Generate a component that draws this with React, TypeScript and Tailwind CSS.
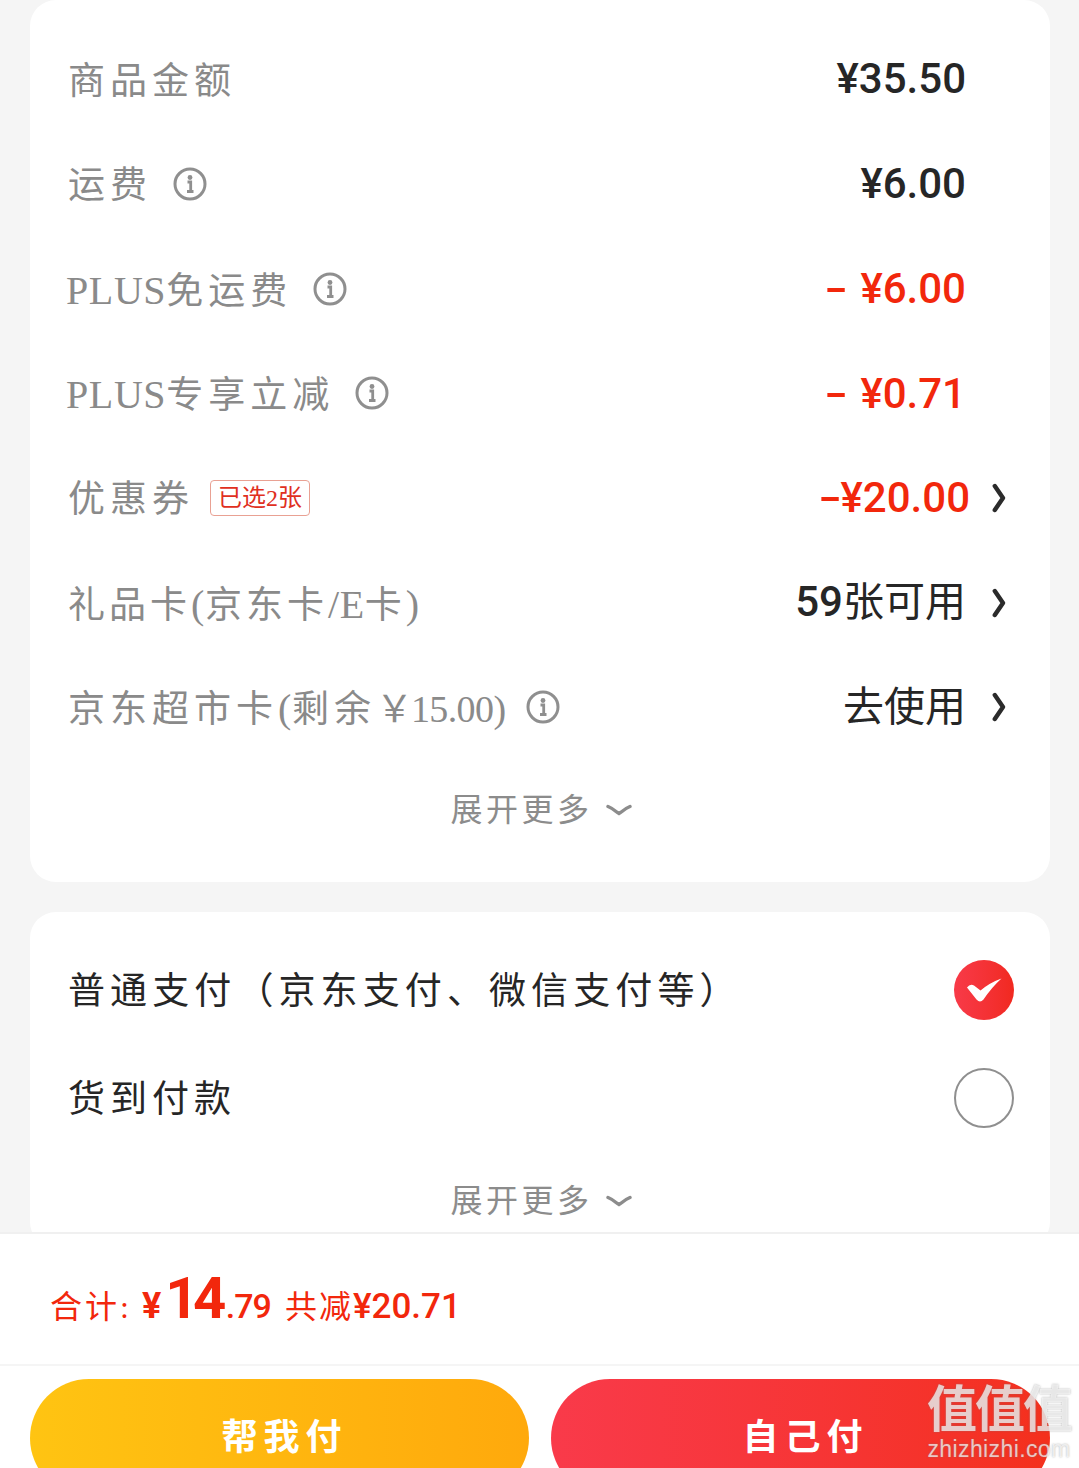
const serif = "font-['Liberation_Serif','Noto_Sans_CJK_SC',serif]";
const numFont = "font-['Roboto','Noto_Sans_CJK_SC',sans-serif]";

function InfoIcon() {
  return (
    <svg className="w-[34px] h-[34px]" viewBox="0 0 34 34" fill="none">
      <circle cx="17" cy="17" r="15" stroke="#8f8f8f" strokeWidth="3" />
      <circle cx="17" cy="10.5" r="2.4" fill="#8f8f8f" />
      <path d="M14.5 15h3.2v9M14 24.5h6.5" stroke="#8f8f8f" strokeWidth="2.8" />
    </svg>
  );
}

function Chevron() {
  return (
    <svg className="w-[14px] h-[30px]" viewBox="0 0 14 30" fill="none">
      <path d="M2.8 3 11 15 2.8 27" stroke="#2b2b2b" strokeWidth="4.4" strokeLinecap="round" strokeLinejoin="round" />
    </svg>
  );
}

function ExpandMore() {
  return (
    <div className="flex items-center justify-center h-full pt-[2px]">
      <span className={`${serif} text-[32px] tracking-[3.5px] text-[#8c8c8c]`}>展开更多</span>
      <svg className="w-[26px] h-[12px] ml-[13px]" viewBox="0 0 26 12" fill="none">
        <path d="M2 2.5C8 5 10 8 13 9.5 16 8 18 5 24 2.5" stroke="#8c8c8c" strokeWidth="3.4" strokeLinecap="round" />
      </svg>
    </div>
  );
}

// latin runs sit at a larger size, the CJK glyphs are spaced out
function Label({ text, tracking }: { text: string; tracking: string }) {
  const parts = text.match(/[A-Za-z0-9.()/]+|[^A-Za-z0-9.()/]+/g) ?? [];
  return (
    <span className={`${serif} text-[37px] ${tracking} text-[#8a8a8a] whitespace-pre mt-[4px]`}>
      {parts.map((part, i) => {
        if (/^[0-9]/.test(part)) {
          return <span key={i} className="text-[38px] tracking-[-0.6px] ml-[-7px]">{part}</span>;
        }
        if (/^[A-Za-z.()/]/.test(part)) {
          return <span key={i} className="text-[40px] tracking-[0.6px]">{part}</span>;
        }
        return <span key={i}>{part}</span>;
      })}
    </span>
  );
}

function Value({ row }: { row: Row }) {
  const color = row.red ? 'text-[#f2270c]' : 'text-[#262626]';
  const match = row.value.match(/^(-)( ?)(.*)$/);
  if (match) {
    return (
      <span className={`${numFont} font-medium text-[42px] whitespace-pre ${color} ${row.arrow ? 'mr-[-4px] mb-[2px]' : ''}`}>
        <span className={`inline-block scale-x-[1.6] ml-[4px] ${match[2] ? 'mr-[17px]' : 'mr-[3px]'}`}>-</span>
        {match[3]}
      </span>
    );
  }
  const parts = row.value.match(/[0-9¥.]+|[^0-9¥.]+/g) ?? [];
  return (
    <span className={`${numFont} font-medium text-[42px] whitespace-pre mb-[2px] ${color}`}>
      {parts.map((part, i) =>
        /^[0-9¥.]/.test(part) ? (
          <span key={i}>{part}</span>
        ) : (
          <span key={i} className="font-normal text-[41px]">{part}</span>
        ),
      )}
    </span>
  );
}

type Row = {
  label: string;
  value: string;
  info?: boolean;
  red?: boolean;
  arrow?: boolean;
  badge?: boolean;
  shift?: string;
  tracking?: string;
};

const rows: Row[] = [
  { label: '商品金额', value: '¥35.50' },
  { label: '运费', value: '¥6.00', info: true },
  { label: 'PLUS免运费', value: '- ¥6.00', info: true, red: true, shift: '-ml-[2px]' },
  { label: 'PLUS专享立减', value: '- ¥0.71', info: true, red: true, shift: '-ml-[2px]' },
  { label: '优惠券', value: '-¥20.00', red: true, arrow: true, badge: true },
  { label: '礼品卡(京东卡/E卡)', value: '59张可用', arrow: true, tracking: 'tracking-[4px]' },
  { label: '京东超市卡(剩余￥15.00)', value: '去使用', info: true, arrow: true },
];

export default function App() {
  return (
    <div className="h-[1468px] w-[1079px] overflow-hidden bg-[#f5f5f5] flex flex-col relative">
      <div className="flex-1 min-h-0 overflow-hidden pl-[30px] pr-[29px]">
        {/* Price details */}
        <div className="bg-white rounded-[26px] pt-[27px] pb-[24px] pl-[38px] pr-[44px]">
          {rows.map((row) => (
            <div key={row.label} className="h-[104.7px] flex items-center justify-between">
              <div className={`flex items-center ${row.shift ?? ''}`}>
                <Label text={row.label} tracking={row.tracking ?? 'tracking-[5px]'} />
                {row.info && <span className="ml-[21px] flex"><InfoIcon /></span>}
                {row.badge && (
                  <span className={`${serif} ml-[16px] h-[36px] w-[100px] flex items-center justify-center border border-[#e9a193] rounded-[4px] text-[24px] text-[#e0301e]`}>
                    已选2张
                  </span>
                )}
              </div>
              <div className="flex items-center">
                <Value row={row} />
                <span className="w-[40px] flex justify-end">{row.arrow && <Chevron />}</span>
              </div>
            </div>
          ))}
          <div className="h-[98px] pl-[8px]">
            <ExpandMore />
          </div>
        </div>

        {/* Payment method */}
        <div className="bg-white rounded-[26px] mt-[30px] pt-[24px] pl-[38px] pr-[36px]">
          <div className="h-[108px] flex items-center justify-between">
            <span className={`${serif} text-[37px] tracking-[5.1px] text-[#262626] mt-[3px]`}>普通支付（京东支付、微信支付等）</span>
            <span className="w-[60px] h-[60px] rounded-full bg-gradient-to-r from-[#f83a48] to-[#f1291f] flex items-center justify-center">
              <svg className="w-[38px] h-[28px]" viewBox="0 0 38 28" fill="white">
                <path d="M2 11.5Q5 7.5 9 9.5L15.5 14.5Q25 6.5 36.5 2.5 27 11 18.5 23.5 15 27.5 11.5 23.5Z" />
              </svg>
            </span>
          </div>
          <div className="h-[108px] flex items-center justify-between">
            <span className={`${serif} text-[37px] tracking-[5px] text-[#262626] mt-[3px]`}>货到付款</span>
            <span className="w-[60px] h-[60px] rounded-full border-2 border-[#8f8f8f]" />
          </div>
          <div className="h-[96px]">
            <ExpandMore />
          </div>
        </div>
      </div>

      {/* Footer */}
      <div className="bg-white border-t-2 border-[#f0f0f0] shrink-0 h-[236px]">
        <div className="h-[132px] border-b-2 border-[#f5f5f5] flex items-baseline pl-[50px] pt-[21px] text-[#f2270c] font-['Roboto',sans-serif]">
          <span className={`${serif} text-[32px] tracking-[3px]`}>合计:</span>
          <span className="font-bold text-[36px] ml-[10px]">¥</span>
          <span className="font-bold text-[58px] tracking-[-5.5px] ml-[4px] mr-[5px]">14</span>
          <span className="font-medium text-[34px] tracking-[-1px]">.79</span>
          <span className={`${serif} text-[32px] tracking-[2px] ml-[14px]`}>共减</span>
          <span className="font-medium text-[35px]">¥20.71</span>
        </div>
        <div className="flex gap-[22px] pl-[30px] pr-[29px] pt-[13px]">
          <div className="flex-1 h-[118px] rounded-full bg-gradient-to-r from-[#ffc412] to-[#ffa90c] flex items-center justify-center pl-[10px]">
            <span className={`${serif} font-bold text-[36px] tracking-[6px] text-white`}>帮我付</span>
          </div>
          <div className="flex-1 h-[118px] rounded-full bg-gradient-to-r from-[#f93a4a] to-[#f4301c] flex items-center justify-center pl-[10px]">
            <span className={`${serif} font-bold text-[36px] tracking-[6px] text-white`}>自己付</span>
          </div>
        </div>
      </div>

      {/* Watermark */}
      <div className="absolute left-[926px] top-[1385px] w-[146px] text-center leading-none text-white/70 font-['Liberation_Sans','Noto_Sans_CJK_SC',sans-serif] [text-shadow:0_0_2px_rgba(120,120,120,0.6)]">
        <div className="text-[50px] font-bold tracking-[-2px] whitespace-nowrap">值值值</div>
        <div className="text-[23px] tracking-[0.4px] mt-[3px] whitespace-nowrap">zhizhizhi.com</div>
      </div>
    </div>
  );
}
